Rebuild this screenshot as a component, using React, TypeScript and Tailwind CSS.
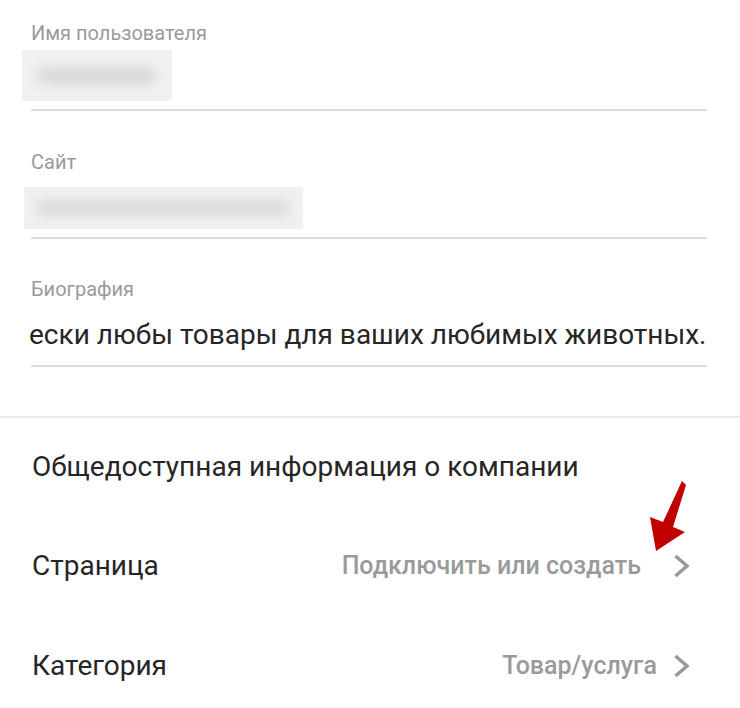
import React from "react";

const Chevron = () => (
  <svg width="20" height="24" viewBox="0 0 20 24" className="shrink-0 block">
    <path d="M3.5 2 L15 12 L3.5 22" fill="none" stroke="#999999" strokeWidth="3.5" strokeLinecap="butt" strokeLinejoin="miter" />
  </svg>
);

export default function App() {
  return (
    <div className="relative w-[740px] h-[708px] bg-white overflow-hidden text-[#262626]" style={{ fontFamily: "Roboto, 'Noto Sans', sans-serif" }}>
      {/* Username */}
      <div className="pl-[31px] pr-[33px] pt-[21px]">
        <div className="text-[20px] leading-[24px] text-[#9a9a9a]">Имя пользователя</div>
        <div className="mt-[5px] -ml-[9px] w-[150px] h-[51px] bg-[#f1f1f1] flex items-center justify-center">
          <div className="w-[120px] h-[18px] rounded-full bg-[#d9d9d9] blur-[6px]" />
        </div>
        <div className="mt-[8px] h-[2px] bg-[#dcdcdc]" />
      </div>

      {/* Site */}
      <div className="pl-[31px] pr-[33px] pt-[39px]">
        <div className="text-[20px] leading-[24px] text-[#9a9a9a]">Сайт</div>
        <div className="mt-[13px] -ml-[7px] w-[279px] h-[42px] bg-[#f1f1f1] flex items-center justify-center">
          <div className="w-[255px] h-[16px] rounded-full bg-[#dadada] blur-[6px]" />
        </div>
        <div className="mt-[8px] h-[2px] bg-[#dcdcdc]" />
      </div>

      {/* Bio */}
      <div className="pl-[31px] pr-[33px] pt-[38px]">
        <div className="text-[20px] leading-[24px] text-[#9a9a9a]">Биография</div>
        <div className="mt-[18px] -ml-[2px] text-[28px] leading-[32px] whitespace-nowrap">
          ески любы товары для ваших любимых животных.
        </div>
        <div className="mt-[14px] h-[2px] bg-[#dcdcdc]" />
      </div>

      {/* divider */}
      <div className="mt-[49px] h-[2px] bg-[#e8e8e8]" />

      <div className="px-[32px] pt-[33px] text-[28px] leading-[32px] whitespace-nowrap">Общедоступная информация о компании</div>

      <div className="pl-[32px] pr-[48px] mt-[67px] h-[32px] flex items-center justify-between">
        <div className="text-[28px] leading-[32px]">Страница</div>
        <div className="flex items-center">
          <span className="text-[25px] leading-[32px] font-medium text-[#9a9a9a]">Подключить или создать</span>
          <span className="ml-[31px]"><Chevron /></span>
        </div>
      </div>

      <div className="pl-[32px] pr-[48px] mt-[68px] h-[32px] flex items-center justify-between">
        <div className="text-[28px] leading-[32px]">Категория</div>
        <div className="flex items-center">
          <span className="text-[25px] leading-[32px] font-medium text-[#9a9a9a]">Товар/услуга</span>
          <span className="ml-[15px]"><Chevron /></span>
        </div>
      </div>

      {/* red arrow annotation */}
      <svg className="absolute left-0 top-0" width="740" height="708" viewBox="0 0 740 708">
        <polygon points="682,481 686,485 673,527 685,532 656,551 650,517 663,522" fill="#c00000" />
      </svg>
    </div>
  );
}
